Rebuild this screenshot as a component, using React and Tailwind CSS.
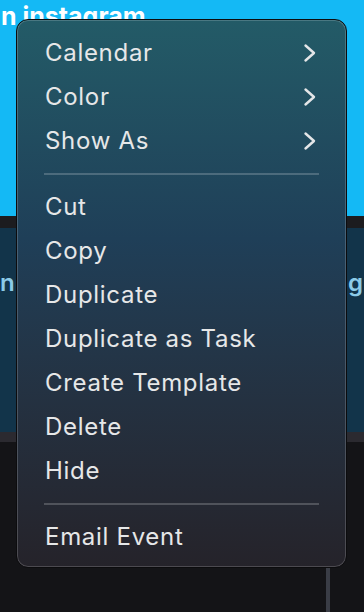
import React from 'react';

const groups = [
  [
    { label: 'Calendar', sub: true },
    { label: 'Color', sub: true },
    { label: 'Show As', sub: true },
  ],
  [
    { label: 'Cut' },
    { label: 'Copy' },
    { label: 'Duplicate' },
    { label: 'Duplicate as Task' },
    { label: 'Create Template' },
    { label: 'Delete' },
    { label: 'Hide' },
  ],
  [{ label: 'Email Event' }],
];

const Chevron = () => (
  <svg width="14" height="20" viewBox="0 0 14 20" fill="none">
    <path d="M2.5 2.5 L11 10 L2.5 17.5" stroke="#e4e6e8" strokeWidth="2.4" strokeLinecap="round" strokeLinejoin="round" />
  </svg>
);

export default function App() {
  return (
    <div className="relative w-[364px] h-[612px] overflow-hidden bg-[#141417]" style={{ fontFamily: 'Inter, "Noto Sans", sans-serif' }}>
      {/* backdrop */}
      <div className="flex flex-col">
        <div className="h-[216px] bg-[#14b9f5] text-white font-bold text-[25px] leading-none pt-[4px] pl-[1px]">n instagram</div>
        <div className="h-[12px] bg-[#1c1c1f]" />
        <div className="h-[204px] bg-[#12344a] flex justify-between items-start pt-[43px] text-[#8ccbe8] font-semibold text-[24px] leading-none">
          <span>n</span>
          <span className="pr-[1px]">g</span>
        </div>
        <div className="h-[10px] bg-[#2b2a30]" />
        <div className="flex-1 h-[170px] flex justify-end">
          <div className="w-[4px] h-[44px] mt-[126px] bg-[#3a3d46] mr-[34px]" />
        </div>
      </div>

      {/* context menu */}
      <div className="absolute left-[16px] top-[19px] w-[331px] h-[549px] rounded-[12px] border border-[#0c0c0e] bg-gradient-to-b from-[#235b67] via-[#1f3f58] via-40% to-[#25232a] shadow-[inset_0_0_0_1px_rgba(255,255,255,0.18)] pt-[11px] pb-[8px]">
        {groups.map((items, gi) => (
          <div key={gi}>
            {gi > 0 && (
              <div className="h-[22px] flex items-center px-[27px]">
                <div className="h-[2px] w-full bg-[#ffffff]/20" />
              </div>
            )}
            {items.map(it => (
              <div key={it.label} className="h-[44px] flex items-center justify-between pl-[28px] pr-[29px] text-[#e6e7e8] text-[24px] tracking-[0.7px]">
                <span>{it.label}</span>
                {it.sub && <Chevron />}
              </div>
            ))}
          </div>
        ))}
      </div>
    </div>
  );
}
